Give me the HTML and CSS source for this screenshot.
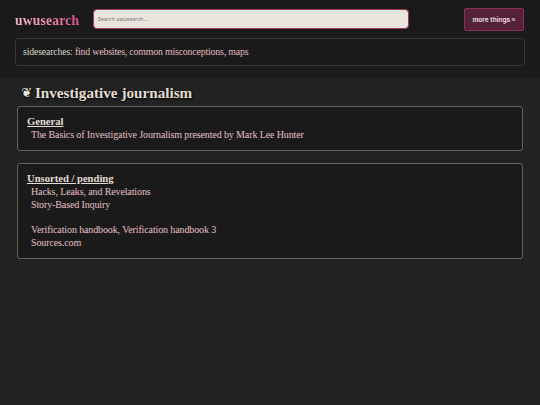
FILE: index.html
```html
<!DOCTYPE html>
<html lang="en">
<head>
<meta charset="utf-8">
<title>uwusearch</title>
<link rel="stylesheet" href="styles.css">
</head>
<body>
<header class="top">
  <div class="bar">
    <a class="logo" href="#">uwusearch</a>
    <input class="search" type="text" placeholder="Search uwusearch...">
    <button class="more" type="button">more things ≡</button>
  </div>
  <div class="side"><span class="side-label">sidesearches:</span> find websites, common misconceptions, maps</div>
</header>
<main class="content">
  <h1 class="title"><span class="flower">❦</span><span>Investigative journalism</span></h1>
  <section class="card">
    <h2 class="card-title">General</h2>
    <p class="item">The Basics of Investigative Journalism presented by Mark Lee Hunter</p>
  </section>
  <section class="card">
    <h2 class="card-title">Unsorted / pending</h2>
    <p class="item">Hacks, Leaks, and Revelations</p>
    <p class="item">Story-Based Inquiry</p>
    <p class="item">&nbsp;</p>
    <p class="item">Verification handbook, Verification handbook 3</p>
    <p class="item">Sources.com</p>
  </section>
</main>
</body>
</html>
```
FILE: styles.css
```css
html, body { margin: 0; padding: 0; height: 100%; }
body {
  background: #222222;
  font-family: "Liberation Serif", serif;
  font-size: 10px;
  letter-spacing: -0.12px;
  line-height: 12.67px;
  color: #e8c0c6;
  overflow: hidden;
}
.top {
  background: #1a1a1a;
  height: 78px;
  box-sizing: border-box;
  padding: 8px 15px 0;
}
.bar {
  display: flex;
  align-items: center;
  height: 23px;
}
.logo {
  width: 78px;
  padding-top: 4px;
  font-weight: 700;
  font-size: 13.6px;
  letter-spacing: 0.2px;
  text-decoration: none;
  background: linear-gradient(90deg, #f2b8cc 0, #f08cb2 45%, #ea4f90 64px);
  -webkit-background-clip: text;
  background-clip: text;
  color: transparent;
}
.search {
  width: 316px;
  height: 20px;
  margin-bottom: 1px;
  box-sizing: border-box;
  border: 1px solid #a03a5c;
  border-radius: 4px;
  background: #e8e5dd;
  padding: 0 3.5px;
  font-family: "Inter", sans-serif;
  font-size: 5.2px;
  letter-spacing: 0;
  outline: none;
}
.search::placeholder { color: #777; opacity: 1; }
.more {
  margin-left: 55px;
  width: 60px;
  height: 23px;
  box-sizing: border-box;
  padding: 0;
  border: 1px solid #8a3050;
  border-radius: 2px;
  background: #54213a;
  color: #e8d8dc;
  font-family: "Inter", sans-serif;
  font-size: 6.5px;
  font-weight: 700;
}
.side {
  margin-top: 7px;
  height: 28px;
  box-sizing: border-box;
  border: 1px solid #453338;
  border-radius: 3px;
  padding: 7px 7px;
  font-size: 9.8px;
  letter-spacing: -0.16px;
  color: #e4bcc2;
}
.side-label { color: #d8d4cc; }
.content { padding: 6px 17px 0; }
.title {
  display: flex;
  align-items: center;
  gap: 3px;
  height: 18px;
  margin: 0 0 4px;
  padding-left: 4px;
  font-size: 15.2px;
  letter-spacing: 0;
  line-height: 18px;
  font-weight: 700;
  color: #e4dcd2;
  text-shadow: 1px 1px 2px #000;
}
.flower {
  font-family: "DejaVu Sans", sans-serif;
  font-size: 13px;
  color: #f4eee6;
}
.card {
  margin-bottom: 12px;
  box-sizing: border-box;
  border: 1px solid #6a5e60;
  border-radius: 3px;
  background: #1a1a1a;
  padding: 9px 9px 9px;
}
.card-title {
  margin: 0;
  font-size: 10.6px;
  letter-spacing: 0;
  line-height: 12.67px;
  font-weight: 700;
  color: #e2ded4;
  text-decoration: underline;
}
.item { margin: 0; padding-left: 4px; }
```
